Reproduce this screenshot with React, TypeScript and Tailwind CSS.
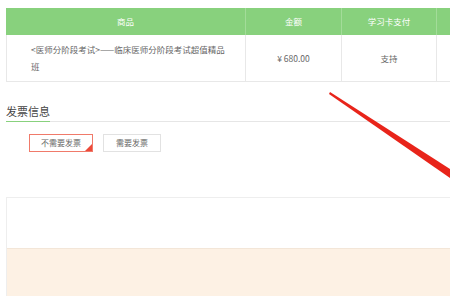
import React from 'react';

const font = { fontFamily: '"Noto Sans CJK SC", "Noto Sans", sans-serif' };

export default function App() {
  return (
    <div className="relative w-[450px] h-[299px] overflow-hidden bg-white" style={font}>
      <div className="w-[600px] pl-[6px] pt-[8px]">
        {/* Order table */}
        <div className="grid grid-cols-[240px_96px_95px_120px] text-[8.5px]">
          <div className="h-[27px] bg-[#88d17d] text-white flex items-center justify-center border-r border-[#a3dc99]">商品</div>
          <div className="h-[27px] bg-[#88d17d] text-white flex items-center justify-center border-r border-[#a3dc99]">金额</div>
          <div className="h-[27px] bg-[#88d17d] text-white flex items-center justify-center border-r border-[#a3dc99]">学习卡支付</div>
          <div className="h-[27px] bg-[#88d17d]" />

          <div className="h-[47px] border-l border-b border-r border-[#e8e8e8] text-[#666] pl-[24px] pr-[20px] pt-[6px] leading-[17px]">
            &lt;医师分阶段考试&gt;——临床医师分阶段考试超值精品班
          </div>
          <div className="h-[47px] border-b border-r border-[#e8e8e8] text-[#666] flex items-center justify-center">¥ 680.00</div>
          <div className="h-[47px] border-b border-r border-[#e8e8e8] text-[#666] flex items-center justify-center">支持</div>
          <div className="h-[47px] border-b border-[#e8e8e8]" />
        </div>

        {/* Invoice section */}
        <div className="mt-[21px] border-b border-[#e6e6e6] h-[19px] relative">
          <span className="text-[11px] leading-[16px] text-[#444] block">发票信息</span>
          <div className="absolute left-0 bottom-[-1px] w-[44px] h-[1px] bg-[#88d17d]" />
        </div>

        <div className="flex gap-[10px] pl-[23px] mt-[12px] text-[8px] text-[#666]">
          <div className="relative w-[64px] h-[18px] border border-[#f07a6a] flex items-center justify-center">
            不需要发票
            <svg className="absolute right-0 bottom-0" width="7" height="7" viewBox="0 0 7 7">
              <polygon points="7,0 7,7 0,7" fill="#ec4a3a" />
            </svg>
          </div>
          <div className="w-[58px] h-[18px] border border-[#e2e2e2] flex items-center justify-center">需要发票</div>
        </div>

        {/* Bottom box */}
        <div className="mt-[45px] border-l border-t border-[#eeeeee]">
          <div className="h-[51px] bg-white border-b border-[#f3e6d8]" />
          <div className="h-[47px] bg-[#fdf1e4]" />
        </div>
      </div>

      {/* red annotation arrow */}
      <svg className="absolute left-0 top-0 pointer-events-none" width="450" height="299">
        <polygon points="330,92 450,169 450,178 329,94" fill="#e8241a" />
      </svg>
    </div>
  );
}
